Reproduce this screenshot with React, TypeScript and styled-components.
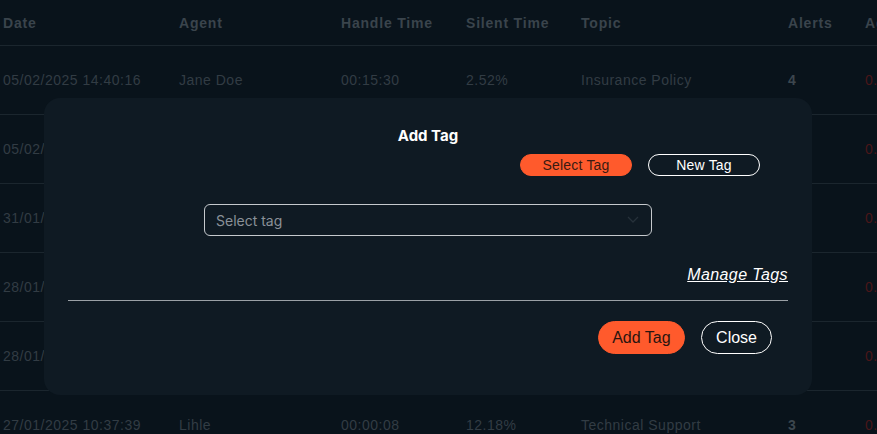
import * as React from "react";
import styled, { createGlobalStyle } from "styled-components";

const rows = [
  ["05/02/2025 14:40:16", "Jane Doe", "00:15:30", "2.52%", "Insurance Policy", "4", "0.41"],
  ["05/02/2025 11:02:51", "Jane Doe", "00:07:12", "4.10%", "Claims", "2", "0.38"],
  ["31/01/2025 16:21:09", "Sipho", "00:03:44", "8.02%", "Billing", "1", "0.55"],
  ["28/01/2025 09:12:33", "Lihle", "00:11:20", "3.75%", "Insurance Policy", "5", "0.29"],
  ["28/01/2025 08:45:02", "Jane Doe", "00:09:58", "6.44%", "Technical Support", "2", "0.47"],
  ["27/01/2025 10:37:39", "Lihle", "00:00:08", "12.18%", "Technical Support", "3", "0.12"]
];

const headers = ["Date", "Agent", "Handle Time", "Silent Time", "Topic", "Alerts", "Agent Score"];

export default function App() {
  return (
    <>
      <GlobalStyle />
      <Page>
        <Table>
          <HeaderRow>
            {headers.map(h => (
              <HeaderCell key={h}>{h}</HeaderCell>
            ))}
          </HeaderRow>
          {rows.map((r, i) => (
            <Row key={i}>
              <Cell>{r[0]}</Cell>
              <Cell>{r[1]}</Cell>
              <Cell>{r[2]}</Cell>
              <Cell>{r[3]}</Cell>
              <Cell>{r[4]}</Cell>
              <Cell bold>{r[5]}</Cell>
              <ScoreCell>{r[6]}</ScoreCell>
            </Row>
          ))}
        </Table>

        <Overlay>
          <Modal>
            <Title>Add Tag</Title>
            <ToggleRow>
              <Pill active>Select Tag</Pill>
              <Pill>New Tag</Pill>
            </ToggleRow>
            <SelectBox>
              <Placeholder>Select tag</Placeholder>
              <svg width="12" height="8" viewBox="0 0 12 8">
                <polyline points="1,1 6,6 11,1" fill="none" stroke="#26313a" strokeWidth="1.3" />
              </svg>
            </SelectBox>
            <LinkRow>
              <ManageLink href="#">Manage Tags</ManageLink>
            </LinkRow>
            <Divider />
            <Footer>
              <ActionButton primary>Add Tag</ActionButton>
              <ActionButton>Close</ActionButton>
            </Footer>
          </Modal>
        </Overlay>
      </Page>
    </>
  );
}

// css
const GlobalStyle = createGlobalStyle`
  html, body {
    margin: 0;
    padding: 0;
    background: #09131b;
  }
  body {
    font-family: "Liberation Sans", Arial, sans-serif;
  }
`;

const Page = styled.div`
  position: relative;
  width: 877px;
  height: 434px;
  overflow: hidden;
  background: #09131b;
`;

const columns = "176px 162px 125px 115px 207px 77px 120px";

const Table = styled.div`
  display: flex;
  flex-direction: column;
  width: 982px;
`;

const HeaderRow = styled.div`
  display: grid;
  grid-template-columns: ${columns};
  height: 45px;
  align-items: center;
  border-bottom: 1px solid #1b262e;
`;

const HeaderCell = styled.div`
  padding-left: 3px;
  font-size: 14px;
  font-weight: 700;
  letter-spacing: 0.8px;
  color: #3a444c;
  white-space: nowrap;
`;

const Row = styled.div`
  display: grid;
  grid-template-columns: ${columns};
  height: 68px;
  align-items: center;
  border-bottom: 1px solid #1b262e;
`;

const Cell = styled.div<{ bold?: boolean }>`
  padding-left: 3px;
  font-size: 14px;
  letter-spacing: 0.5px;
  font-weight: ${p => (p.bold ? 700 : 400)};
  color: ${p => (p.bold ? "#3c464e" : "#323c44")};
  white-space: nowrap;
`;

const ScoreCell = styled(Cell)`
  color: #4a1619;
`;

const Overlay = styled.div`
  position: absolute;
  inset: 0;
`;

const Modal = styled.div`
  position: absolute;
  left: 44px;
  top: 98px;
  width: 768px;
  height: 297px;
  box-sizing: border-box;
  padding: 28px 24px 0;
  border-radius: 16px;
  background: #0f1a23;
  display: flex;
  flex-direction: column;
`;

const Title = styled.div`
  height: 20px;
  line-height: 20px;
  text-align: center;
  font-family: Inter, "Liberation Sans", sans-serif;
  font-size: 15px;
  font-weight: 700;
  color: #ffffff;
`;

const ToggleRow = styled.div`
  display: flex;
  justify-content: flex-end;
  gap: 16px;
  margin-top: 8px;
  padding-right: 28px;
`;

const Pill = styled.button<{ active?: boolean }>`
  width: 112px;
  height: 22px;
  box-sizing: border-box;
  border-radius: 11px;
  border: 1px solid ${p => (p.active ? "#ff5a2c" : "#ffffff")};
  background: ${p => (p.active ? "#ff5a2c" : "transparent")};
  color: ${p => (p.active ? "#3a1a12" : "#ffffff")};
  font-family: "Liberation Sans", Arial, sans-serif;
  font-size: 14px;
  letter-spacing: 0.2px;
  padding: 0;
  line-height: 20px;
`;

const SelectBox = styled.div`
  align-self: center;
  width: 448px;
  height: 32px;
  box-sizing: border-box;
  margin-top: 28px;
  border: 1px solid #c5c9cd;
  border-radius: 6px;
  display: flex;
  align-items: center;
  justify-content: space-between;
  padding: 0 12px 0 11px;
`;

const Placeholder = styled.span`
  font-family: Inter, "Liberation Sans", sans-serif;
  font-size: 14px;
  color: #8a9198;
`;

const LinkRow = styled.div`
  display: flex;
  justify-content: flex-end;
  margin-top: 29px;
  height: 20px;
  line-height: 20px;
`;

const ManageLink = styled.a`
  font-size: 16px;
  font-style: italic;
  letter-spacing: 0.4px;
  color: #ffffff;
  text-decoration: underline;
`;

const Divider = styled.div`
  margin-top: 15px;
  height: 1px;
  background: #9ba1a6;
`;

const Footer = styled.div`
  display: flex;
  justify-content: flex-end;
  gap: 16px;
  margin-top: 20px;
  padding-right: 16px;
`;

const ActionButton = styled.button<{ primary?: boolean }>`
  height: 33px;
  box-sizing: border-box;
  padding: 0 ${p => (p.primary ? "13.5px" : "14px")};
  border-radius: 17px;
  border: 1px solid ${p => (p.primary ? "#ff5a2c" : "#ffffff")};
  background: ${p => (p.primary ? "#ff5a2c" : "transparent")};
  color: ${p => (p.primary ? "#2a1510" : "#ffffff")};
  font-family: "Liberation Sans", Arial, sans-serif;
  font-size: 16px;
`;
